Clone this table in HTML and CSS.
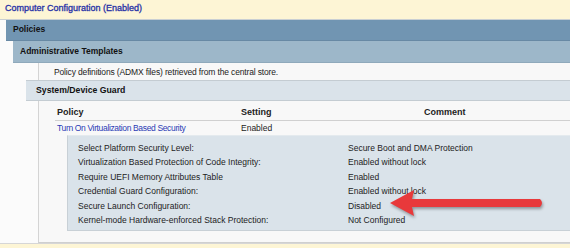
FILE: index.html
```html
<!DOCTYPE html>
<html lang="en">
<head>
  <meta charset="UTF-8" />
  <title>Computer Configuration</title>
  <link rel="stylesheet" href="styles.css">
</head>
<body>

  <div class="section-title">Computer Configuration (Enabled)</div>

  <div class="policies">
    <div class="band band-dark">Policies</div>
    <div class="admin">
      <div class="band band-mid">Administrative Templates</div>
      <div class="admin-body">
        <div class="note">Policy definitions (ADMX files) retrieved from the central store.</div>
        <div class="band band-light">System/Device Guard</div>

        <div class="policy-table">
          <div class="table-head">
            <span>Policy</span>
            <span>Setting</span>
            <span>Comment</span>
          </div>
          <div class="table-row">
            <a href="#">Turn On Virtualization Based Security</a>
            <span>Enabled</span>
            <span></span>
          </div>
          <div class="options">
            <span>Select Platform Security Level:</span><span>Secure Boot and DMA Protection</span>
            <span>Virtualization Based Protection of Code Integrity:</span><span>Enabled without lock</span>
            <span>Require UEFI Memory Attributes Table</span><span>Enabled</span>
            <span>Credential Guard Configuration:</span><span>Enabled without lock</span>
            <span>Secure Launch Configuration:</span><span>Disabled</span>
            <span>Kernel-mode Hardware-enforced Stack Protection:</span><span>Not Configured</span>
          </div>
        </div>
      </div>
    </div>
  </div>

  <div class="section-next"></div>

  <svg class="arrow" width="170" height="40" viewBox="0 0 170 40">
    <path d="M2 17 L26 4 L24 13 L152 13 Q156 17 152 21 L24 21 L26 30 Z" fill="#e8393b" />
  </svg>

</body>
</html>
```

FILE: styles.css
```css
body {
  margin: 0;
  background: #fbfbfb;
  font-family: "Liberation Sans", Arial, sans-serif;
  font-size: 8.5px;
  color: #222;
  position: relative;
  height: 248px;
  overflow: hidden;
}

.section-title {
  height: 19px;
  line-height: 17px;
  padding-left: 5px;
  background: #fdf5d5;
  color: #2630a6;
  font-size: 9px;
  -webkit-text-stroke: 0.3px #2630a6;
  border-bottom: 1px solid #c9cfd3;
}

.section-next {
  height: 4px;
  background: #fdf5d5;
  border-top: 1px solid #d6d6d6;
}

.policies {
  margin-left: 6px;
}

.band {
  font-weight: bold;
  font-size: 8.5px;
  color: #111;
  padding-left: 7px;
}

.band-dark {
  height: 20px;
  line-height: 19px;
  background: #7195b2;
  border-bottom: 1px solid #6889a4;
}

.admin {
  margin-left: 7px;
}

.band-mid {
  height: 21px;
  line-height: 20px;
  background: #9db7c9;
  border-bottom: 1px solid #8fa9bb;
}

.admin-body {
  margin-left: 25px;
  background: #f8f8f8;
  border-left: 1px solid #d4d4d4;
  border-bottom: 1px solid #cfcfcf;
  height: 179px;
}

.note {
  height: 17px;
  line-height: 18px;
  padding-left: 15px;
  letter-spacing: -0.15px;
}

.band-light {
  margin-left: -13px;
  height: 19px;
  line-height: 18px;
  padding-left: 10px;
  font-size: 8.7px;
  background: #dae3ea;
  border-top: 1px solid #c4ccd2;
  border-bottom: 1px solid #c4ccd2;
}

.policy-table {
  padding-left: 18px;
}

.table-head,
.table-row {
  display: grid;
  grid-template-columns: 184px 183px 1fr;
}

.table-head {
  height: 19px;
  line-height: 22px;
  font-weight: bold;
  font-size: 9px;
  border-bottom: 1px solid #d0d0d0;
  margin-left: -2px;
  padding-left: 2px;
}

.table-row {
  height: 14px;
  line-height: 15px;
}

.table-row a {
  color: #2a3bb5;
  text-decoration: none;
  letter-spacing: -0.35px;
}

.options {
  margin-left: 10px;
  padding: 5px 0 3px 10px;
  background: #dae3ea;
  border-left: 1px solid #c8d0d6;
  border-top: 1px solid #e4eaee;
  border-bottom: 1px solid #c8d0d6;
  display: grid;
  grid-template-columns: 270px 1fr;
  grid-auto-rows: 14.4px;
  line-height: 14px;
}

.arrow {
  position: absolute;
  left: 388px;
  top: 186px;
  filter: drop-shadow(1px 2px 1.5px rgba(0, 0, 0, 0.35));
}
```
